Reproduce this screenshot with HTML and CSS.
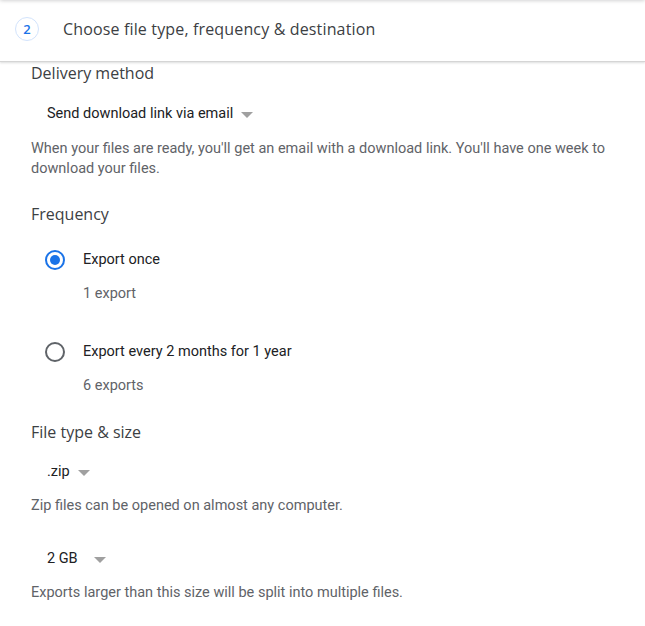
FILE: index.html
```html
<!DOCTYPE html>
<html>
<head>
<meta charset="utf-8">
<link rel="stylesheet" href="styles.css">
</head>
<body>
<div class="page">
  <header class="step-header">
    <span class="step-num">2</span>
    <span class="step-title">Choose file type, frequency &amp; destination</span>
  </header>
  <main class="content">
    <section class="group">
      <h2 class="group-title">Delivery method</h2>
      <div class="select"><span>Send download link via email</span><span class="caret"></span></div>
      <p class="desc">When your files are ready, you'll get an email with a download link. You'll have one week to download your files.</p>
    </section>
    <section class="group freq">
      <h2 class="group-title">Frequency</h2>
      <div class="radio-row">
        <span class="radio checked"></span>
        <div class="radio-text">
          <div class="radio-label">Export once</div>
          <div class="radio-sub">1 export</div>
        </div>
      </div>
      <div class="radio-row">
        <span class="radio"></span>
        <div class="radio-text">
          <div class="radio-label">Export every 2 months for 1 year</div>
          <div class="radio-sub">6 exports</div>
        </div>
      </div>
    </section>
    <section class="group files">
      <h2 class="group-title">File type &amp; size</h2>
      <div class="select type"><span>.zip</span><span class="caret"></span></div>
      <p class="desc tight">Zip files can be opened on almost any computer.</p>
      <div class="select size"><span>2 GB</span><span class="caret"></span></div>
      <p class="desc tight">Exports larger than this size will be split into multiple files.</p>
    </section>
  </main>
</div>
</body>
</html>
```
FILE: styles.css
```css
html, body {
  margin: 0;
  padding: 0;
  background: #fff;
}
body {
  font-family: Roboto, "Liberation Sans", sans-serif;
  color: #202124;
  overflow: hidden;
}
.page {
  width: 645px;
  height: 626px;
  position: relative;
}
.page::before {
  content: "";
  position: absolute;
  left: 0;
  right: 0;
  top: -4px;
  height: 4px;
  box-shadow: 0 0 4px rgba(60, 64, 67, 0.35);
}
.step-header {
  height: 61px;
  display: flex;
  align-items: center;
  padding-left: 15px;
  border-bottom: 1px solid #d5d5d5;
  box-shadow: 0 1px 2px rgba(60, 64, 67, 0.18);
}
.step-num {
  width: 22px;
  height: 22px;
  border: 1px solid #d2e3fc;
  border-radius: 50%;
  display: flex;
  align-items: center;
  justify-content: center;
  color: #1a73e8;
  font-family: "Open Sans", sans-serif;
  font-size: 13px;
  font-weight: 600;
  margin-top: -3px;
}
.step-title {
  margin-left: 24px;
  margin-top: -3px;
  font-family: "Open Sans", sans-serif;
  font-size: 16px;
  color: #3c4043;
  letter-spacing: 0.15px;
}
.content {
  padding: 0 31px;
}
.group-title {
  margin: 0;
  font-family: "Open Sans", sans-serif;
  font-weight: 400;
  font-size: 16px;
  line-height: 20px;
  color: #3c4043;
}
.group:first-child .group-title {
  margin-top: 1px;
}
.select {
  display: inline-flex;
  align-items: center;
  height: 20px;
  line-height: 20px;
  margin: 21px 0 0 16px;
  font-size: 14.5px;
  color: #202124;
}
.caret {
  width: 0;
  height: 0;
  border-left: 6px solid transparent;
  border-right: 6px solid transparent;
  border-top: 6px solid #a0a0a0;
  margin-left: 8px;
  margin-top: 2px;
}
.select.size .caret {
  margin-left: 16px;
}
.desc {
  margin: 15px 0 0;
  font-size: 14.5px;
  line-height: 20px;
  color: #5f6368;
}
.desc.tight {
  margin-top: 14px;
}
.group + .group {
  margin-top: 25px;
}
.group.files {
  margin-top: 26px;
}
.freq .group-title {
  margin-bottom: 26px;
}
.radio-row {
  display: flex;
  align-items: flex-start;
  padding-left: 14px;
  margin-bottom: 38px;
}
.radio-row:last-child {
  margin-bottom: 0;
}
.radio {
  width: 16px;
  height: 16px;
  border: 2px solid #5f6368;
  border-radius: 50%;
  position: relative;
  flex: none;
}
.radio.checked {
  border-color: #1a73e8;
}
.radio.checked::after {
  content: "";
  position: absolute;
  left: 3px;
  top: 3px;
  width: 10px;
  height: 10px;
  border-radius: 50%;
  background: #1a73e8;
}
.radio-text {
  margin-left: 18px;
}
.radio-label {
  font-size: 14.5px;
  line-height: 20px;
  color: #202124;
}
.radio-sub {
  margin-top: 14px;
  font-size: 14.5px;
  line-height: 20px;
  color: #5f6368;
}
.files .select.type {
  margin-top: 20px;
}
.files .select.size {
  margin-top: 33px;
}
```
